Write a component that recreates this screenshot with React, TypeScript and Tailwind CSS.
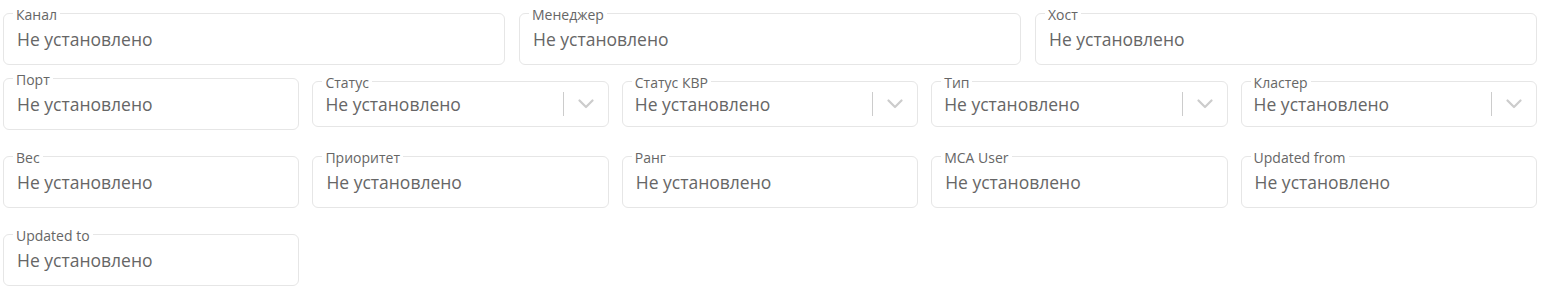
const FONT = "font-['Open_Sans','Noto_Sans',sans-serif]";

type FieldProps = { label: string; select?: boolean };

function Field({ label, select }: FieldProps) {
  return (
    <div className="flex h-[52px] items-center">
      <div
        className={
          'relative flex w-full items-center rounded-[6px] border border-[#e6e6e6] bg-white ' +
          (select ? 'h-[46px] pl-[12px]' : 'h-[52px] pl-[13px]')
        }
      >
        <span className="absolute -top-[8px] left-[9px] bg-white px-[3px] text-[14px] font-medium leading-[18px] text-[#666]">
          {label}
        </span>
        <span className="flex-1 text-[17.5px] leading-[24px] text-[#666]">Не установлено</span>
        {select && (
          <div className="flex h-full items-center">
            <span className="h-[24px] w-px bg-[#ccc]" />
            <span className="flex w-[44px] items-center justify-center">
              <svg width="16" height="10" viewBox="0 0 16 10" fill="none">
                <path d="M1.5 1.5 8 8l6.5-6.5" stroke="#ccc" strokeWidth="2.2" strokeLinecap="round" strokeLinejoin="round" />
              </svg>
            </span>
          </div>
        )}
      </div>
    </div>
  );
}

export default function App() {
  return (
    <div className={`${FONT} bg-white pl-[3px] pr-[10px] pt-[13px]`}>
      <div className="grid grid-cols-3 gap-x-[14px]">
        <Field label="Канал" />
        <Field label="Менеджер" />
        <Field label="Хост" />
      </div>
      <div className="mt-[13px] grid grid-cols-5 gap-x-[13px] gap-y-[26px]">
        <Field label="Порт" />
        <Field label="Статус" select />
        <Field label="Статус КВР" select />
        <Field label="Тип" select />
        <Field label="Кластер" select />
        <Field label="Вес" />
        <Field label="Приоритет" />
        <Field label="Ранг" />
        <Field label="MCA User" />
        <Field label="Updated from" />
        <Field label="Updated to" />
      </div>
    </div>
  );
}
